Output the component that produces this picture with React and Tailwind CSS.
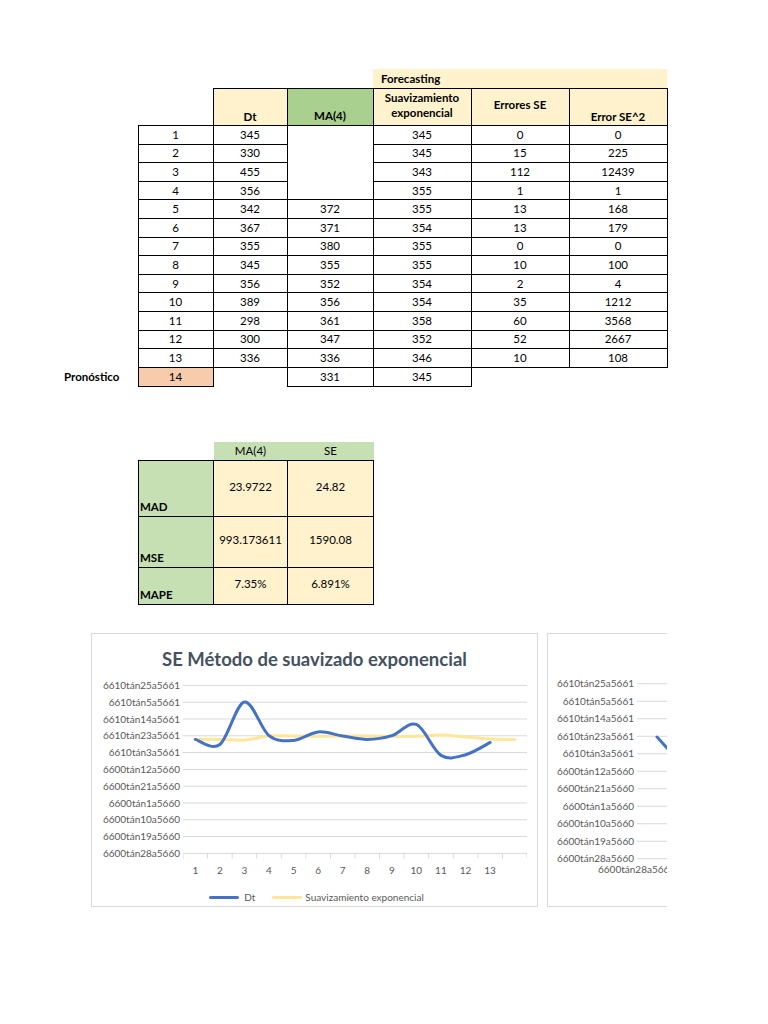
import React from "react";

const dt = [345, 330, 455, 356, 342, 367, 355, 345, 356, 389, 298, 300, 336];
const ma = ["", "", "", "", 372, 371, 380, 355, 352, 356, 361, 347, 336];
const se = [345, 345, 343, 355, 355, 354, 355, 355, 354, 354, 358, 352, 346, 345];
const err = [0, 15, 112, 1, 13, 13, 0, 10, 2, 35, 60, 52, 10];
const err2 = [0, 225, 12439, 1, 168, 179, 0, 100, 4, 1212, 3568, 2667, 108];

const axis1 = [
  "6610tán25a5661",
  "6610tán5a5661",
  "6610tán14a5661",
  "6610tán23a5661",
  "6610tán3a5661",
  "6600tán12a5660",
  "6600tán21a5660",
  "6600tán1a5660",
  "6600tán10a5660",
  "6600tán19a5660",
  "6600tán28a5660",
];

const cell = "border border-black text-center";

// catmull-rom -> bezier, like excel's smoothed lines
const smooth = (pts) => {
  let d = `M${pts[0][0]},${pts[0][1]}`;
  for (let i = 0; i < pts.length - 1; i++) {
    const p0 = pts[i - 1] || pts[i];
    const p1 = pts[i];
    const p2 = pts[i + 1];
    const p3 = pts[i + 2] || p2;
    const c1x = p1[0] + (p2[0] - p0[0]) / 6;
    const c1y = p1[1] + (p2[1] - p0[1]) / 6;
    const c2x = p2[0] - (p3[0] - p1[0]) / 6;
    const c2y = p2[1] - (p3[1] - p1[1]) / 6;
    d += ` C${c1x},${c1y} ${c2x},${c2y} ${p2[0]},${p2[1]}`;
  }
  return d;
};

const step = 344 / 14;
const px = (i) => step / 2 + i * step;
const py = (v) => 62.4 + (345 - v) * 0.34;

const ForecastTable = () => (
  <table className="ml-[50px] border-collapse table-fixed text-[11.5px] text-black">
    <colgroup>
      <col className="w-[88px]" />
      <col className="w-[75px]" />
      <col className="w-[74px]" />
      <col className="w-[86px]" />
      <col className="w-[98px]" />
      <col className="w-[98px]" />
      <col className="w-[98px]" />
    </colgroup>
    <tbody>
      <tr className="h-[19px]">
        <td colSpan={4}></td>
        <td colSpan={3} className="bg-[#fff2cc] font-bold pl-[8px] leading-[19px]">
          Forecasting
        </td>
      </tr>
      <tr className="h-[37px] font-bold leading-[15px]">
        <td></td>
        <td></td>
        <td className={`${cell} bg-[#fff2cc] align-bottom pb-[1px]`}>Dt</td>
        <td className={`${cell} bg-[#a9d08e] align-bottom pb-[2px]`}>MA(4)</td>
        <td className={`${cell} bg-[#fff2cc] align-top pt-[1px]`}>
          Suavizamiento
          <br />
          exponencial
        </td>
        <td className={`${cell} bg-[#fff2cc] align-middle pb-[5px]`}>Errores SE</td>
        <td className={`${cell} bg-[#fff2cc] align-bottom pb-[1px]`}>Error SE^2</td>
      </tr>
      {dt.map((d, i) => (
        <tr key={i} className="h-[18.6px] leading-[16px]">
          <td></td>
          <td className={cell}>{i + 1}</td>
          <td className={cell}>{d}</td>
          {i === 0 && <td rowSpan={4} className={cell}></td>}
          {i > 3 && <td className={cell}>{ma[i]}</td>}
          <td className={cell}>{se[i]}</td>
          <td className={cell}>{err[i]}</td>
          <td className={cell}>{err2[i]}</td>
        </tr>
      ))}
      <tr className="h-[19px] leading-[16px]">
        <td className="font-bold pl-[14px]">Pronóstico</td>
        <td className={`${cell} bg-[#f8cbad]`}>14</td>
        <td></td>
        <td className={cell}>331</td>
        <td className={cell}>345</td>
        <td></td>
        <td></td>
      </tr>
    </tbody>
  </table>
);

const SummaryTable = () => (
  <table className="ml-[138px] mt-[55px] border-collapse table-fixed text-[11.5px] text-black">
    <colgroup>
      <col className="w-[75px]" />
      <col className="w-[74px]" />
      <col className="w-[86px]" />
    </colgroup>
    <tbody>
      <tr className="h-[19px] leading-[16px]">
        <td></td>
        <td className="bg-[#c6e0b4] text-center">MA(4)</td>
        <td className="bg-[#c6e0b4] text-center">SE</td>
      </tr>
      {[
        ["MAD", "23.9722", "24.82", "h-[56px]"],
        ["MSE", "993.173611", "1590.08", "h-[51px]"],
        ["MAPE", "7.35%", "6.891%", "h-[37px]"],
      ].map(([label, a, b, h]) => (
        <tr key={label} className={`${h} leading-[16px]`}>
          <td className="border border-black bg-[#c6e0b4] font-bold align-bottom pl-[1px] pb-[1px]">
            {label}
          </td>
          <td className={`${cell} bg-[#fff2cc] align-middle pb-[4px]`}>{a}</td>
          <td className={`${cell} bg-[#fff2cc] align-middle pb-[4px]`}>{b}</td>
        </tr>
      ))}
    </tbody>
  </table>
);

const MainChart = () => {
  const dtPts = dt.map((v, i) => [px(i), py(v)]);
  const sePts = se.map((v, i) => [px(i), py(v)]);
  return (
    <div className="w-[447px] h-[274px] shrink-0 border border-[#d9d9d9] bg-white flex flex-col">
      <div className="h-[43.6px] pt-[13px] text-center text-[18.5px] leading-[24px] font-bold text-[#46515f]">
        SE Método de suavizado exponencial
      </div>
      <div className="flex">
        <div className="w-[91px] pr-[3px] text-right text-[10px] text-[#595959]">
          {axis1.map((t) => (
            <div key={t} className="h-[16.8px] leading-[16.8px]">
              {t}
            </div>
          ))}
        </div>
        <svg width="344" height="182" className="block">
          {axis1.map((t, i) => (
            <line key={t} x1="0" x2="344" y1={8.4 + i * 16.8} y2={8.4 + i * 16.8} stroke="#d9d9d9" strokeWidth="1" />
          ))}
          {Array.from({ length: 15 }).map((_, i) => (
            <line key={i} x1={i * step} x2={i * step} y1="176.4" y2="181.5" stroke="#d9d9d9" strokeWidth="1" />
          ))}
          <path d={smooth(sePts)} fill="none" stroke="#ffe699" strokeWidth="3" strokeLinecap="round" />
          <path d={smooth(dtPts)} fill="none" stroke="#4472c4" strokeWidth="3" strokeLinecap="round" />
        </svg>
      </div>
      <div className="ml-[91px] flex h-[17px] leading-[17px] text-[10px] text-[#595959]">
        {Array.from({ length: 14 }).map((_, i) => (
          <div key={i} className="w-[24.57px] text-center">
            {i < 13 ? i + 1 : ""}
          </div>
        ))}
      </div>
      <div className="mt-[11px] h-[17px] flex items-center justify-center pl-[4px] text-[10px] text-[#595959]">
        <span className="w-[30px] h-[3px] bg-[#4472c4] rounded-full"></span>
        <span className="ml-[5px] mr-[17px]">Dt</span>
        <span className="w-[30px] h-[3px] bg-[#ffe699] rounded-full"></span>
        <span className="ml-[3px]">Suavizamiento exponencial</span>
      </div>
    </div>
  );
};

const SideChart = () => (
  <div className="w-[447px] h-[274px] shrink-0 border border-[#d9d9d9] bg-white flex flex-col">
    <div className="flex pt-[41.25px]">
      <div className="w-[89px] pr-[3px] text-right text-[10px] text-[#595959]">
        {axis1.map((t) => (
          <div key={t} className="h-[17.5px] leading-[17.5px]">
            {t}
          </div>
        ))}
      </div>
      <svg width="300" height="192" className="block">
        {axis1.map((t, i) => (
          <line key={t} x1="0" x2="300" y1={8.75 + i * 17.5} y2={8.75 + i * 17.5} stroke="#d9d9d9" strokeWidth="1" />
        ))}
        <path d="M20,62 C24,66 27,70 31,74" fill="none" stroke="#4472c4" strokeWidth="3" strokeLinecap="round" />
      </svg>
    </div>
    <div className="-mt-[4.5px] ml-[50px] h-[12px] leading-[12px] text-[10px] text-[#595959]">
      6600tán28a5660
    </div>
  </div>
);

export default function App() {
  return (
    <div className="w-[768px] h-[1024px] overflow-hidden bg-white pt-[69px] font-['Lato',sans-serif]">
      <ForecastTable />
      <SummaryTable />
      <div className="ml-[91px] mt-[28px] w-[576px] overflow-hidden flex gap-[9px]">
        <MainChart />
        <SideChart />
      </div>
    </div>
  );
}
